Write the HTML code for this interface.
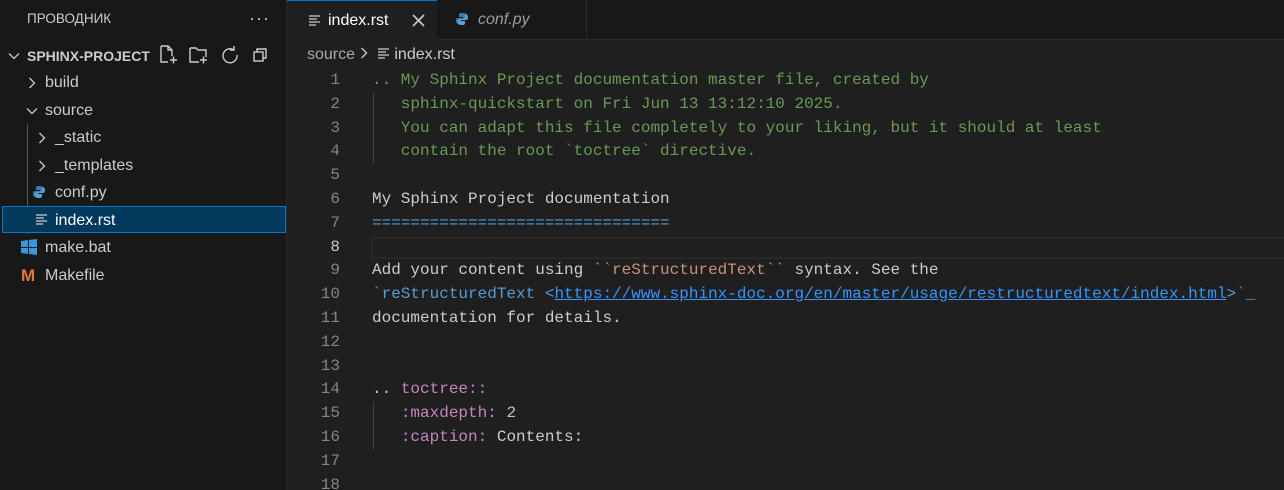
<!DOCTYPE html>
<html><head><meta charset="utf-8"><style>
*{margin:0;padding:0;box-sizing:border-box}
html,body{width:1284px;height:490px;overflow:hidden}
body{background:#1f1f1f;font-family:"Segoe UI","Liberation Sans",sans-serif;color:#cccccc;position:relative}
#side{position:absolute;left:0;top:0;width:287px;height:490px;background:#181818;border-right:1px solid #2b2b2b}
.hdr{position:absolute;left:27px;top:11px;font-size:13.5px;color:#cccccc}
.dots{position:absolute;left:249px;top:8px;font-size:18px;letter-spacing:1px}
.row{position:absolute;left:0;width:287px;height:27px;font-size:16px;line-height:27px;white-space:nowrap}
.sel{background:#04395e;border:1px solid #0078d4;left:2px;width:284px}
.chev{position:absolute;top:8px}
#tabs{position:absolute;left:287px;top:0;right:0;height:40px;background:#181818;border-bottom:1px solid #2b2b2b}
.tab{position:absolute;top:0;height:40px;font-size:16px;line-height:40px}
#code{position:absolute;left:287px;top:69px;right:0;font-family:"Liberation Mono",monospace;font-size:16px}
.l{position:absolute;height:23.8px;line-height:23.8px;white-space:pre;width:997px}
.num{position:absolute;width:53px;text-align:right;left:0;color:#858585}
.t{position:absolute;left:85px}
.g{color:#6a9955}.b{color:#569cd6}.o{color:#ce9178}.m{color:#c586c0}.n{color:#b5cea8}.u{color:#3794ff}
</style></head><body>
<div id="side">
<div class="hdr">ПРОВОДНИК</div><div class="dots">···</div>
<div class="row" style="top:42px"><svg class="chev" style="left:8px" width="12" height="12" fill="none" stroke="#ccc" stroke-width="1.3"><path d="M1 3.5l5 5 5-5"/></svg><b style="position:absolute;left:27px;font-size:14px;top:1px;font-family:'Liberation Sans',sans-serif">SPHINX-PROJECT</b>
<svg style="position:absolute;left:158px;top:2px" width="110" height="22" fill="none" stroke="#ccc" stroke-width="1.4">
<path d="M3 2h7l4 4v6M3 2v16h7M10 2v4h4M12 16h7M15.5 12.5v7"/>
<path d="M32 4h6l2 2h8v7M32 4v14h9M42 16h7M45.5 12.5v7"/>
<path d="M76 6a7 7 0 1 0 3 5M76 2v4h-4"/>
<rect x="96" y="8" width="9" height="9"/><path d="M99 8V5h9v9h-3"/>
</svg></div>
<div class="row" style="top:69px"><svg class="chev" style="left:26px" width="12" height="12" fill="none" stroke="#ccc" stroke-width="1.3"><path d="M3.5 1l5 5-5 5"/></svg><span style="position:absolute;left:45px">build</span></div>
<div class="row" style="top:97px"><svg class="chev" style="left:26px" width="12" height="12" fill="none" stroke="#ccc" stroke-width="1.3"><path d="M1 3.5l5 5 5-5"/></svg><span style="position:absolute;left:45px">source</span></div>
<div style="position:absolute;left:27px;top:124px;width:1px;height:110px;background:#585858"></div>
<div class="row" style="top:124px"><svg class="chev" style="left:36px" width="12" height="12" fill="none" stroke="#ccc" stroke-width="1.3"><path d="M3.5 1l5 5-5 5"/></svg><span style="position:absolute;left:55px">_static</span></div>
<div class="row" style="top:152px"><svg class="chev" style="left:36px" width="12" height="12" fill="none" stroke="#ccc" stroke-width="1.3"><path d="M3.5 1l5 5-5 5"/></svg><span style="position:absolute;left:55px">_templates</span></div>
<div class="row" style="top:179px"><svg style="position:absolute;left:32px;top:6px" width="14" height="14"><path d="M7 1c-3 0-3 1-3 2v2h4v1H3c-2 0-2 2-2 3s1 3 2 3h1V9c0-1 1-2 2-2h3c1 0 2-1 2-2V3c0-1-1-2-4-2z" fill="#3b7bb5"/><path d="M7 13c3 0 3-1 3-2V9H6V8h5c2 0 2-2 2-3s-1-3-2-3h-1v3c0 1-1 2-2 2H5c-1 0-2 1-2 2v2c0 1 1 2 4 2z" fill="#5a9fd4"/></svg><span style="position:absolute;left:55px">conf.py</span></div>
<div class="row sel" style="top:206px"><svg style="position:absolute;left:33px;top:7px" width="12" height="11" stroke="#ccc" stroke-width="1.3"><path d="M0 1h11M0 4h8M0 7h11M0 10h7"/></svg><span style="position:absolute;left:52px;top:0px;color:#fff">index.rst</span></div>
<div class="row" style="top:234px"><svg style="position:absolute;left:21px;top:5px" width="16" height="16" fill="#3a96dd"><path d="M0 2l7-1v7H0zM8 1l8-1v8H8zM0 9h7v6l-7-1zM8 9h8v7l-8-1z"/></svg><span style="position:absolute;left:45px">make.bat</span></div>
<div class="row" style="top:262px"><b style="position:absolute;left:21px;color:#e37933;font-size:17px;font-family:'Liberation Sans',sans-serif">M</b><span style="position:absolute;left:45px">Makefile</span></div>
</div>
<div id="tabs">
<div class="tab" style="left:0;width:150px;background:#1f1f1f;border-top:1px solid #0078d4;height:41px"><svg style="position:absolute;left:22px;top:14px" width="12" height="11" stroke="#ccc" stroke-width="1.3"><path d="M0 1h11M0 4h8M0 7h11M0 10h7"/></svg><span style="position:absolute;left:41px;color:#fff">index.rst</span><svg style="position:absolute;left:125px;top:13px" width="13" height="13" stroke="#ccc" stroke-width="1.6"><path d="M1 1l11 11M12 1L1 12"/></svg></div>
<div class="tab" style="left:150px;width:150px;border-right:1px solid #2b2b2b"><svg style="position:absolute;left:18px;top:12px" width="14" height="14"><path d="M7 1c-3 0-3 1-3 2v2h4v1H3c-2 0-2 2-2 3s1 3 2 3h1V9c0-1 1-2 2-2h3c1 0 2-1 2-2V3c0-1-1-2-4-2z" fill="#3b7bb5"/><path d="M7 13c3 0 3-1 3-2V9H6V8h5c2 0 2-2 2-3s-1-3-2-3h-1v3c0 1-1 2-2 2H5c-1 0-2 1-2 2v2c0 1 1 2 4 2z" fill="#5a9fd4"/></svg><i style="position:absolute;left:41px;color:#9d9d9d">conf.py</i></div>
</div>
<div style="position:absolute;left:307px;top:46px;font-size:16px;white-space:nowrap;color:#a9a9a9">source <svg width="10" height="12" fill="none" stroke="#ccc" stroke-width="1.3"><path d="M2.5 1l5 5-5 5"/></svg> <svg width="12" height="11" stroke="#ccc" stroke-width="1.3" style="margin-left:4px"><path d="M0 1h11M0 4h8M0 7h11M0 10h7"/></svg> <span style="color:#cccccc">index.rst</span></div>
<div id="code">
<div style="position:absolute;left:86px;top:24px;width:1px;height:71px;background:#404040"></div>
<div style="position:absolute;left:86px;top:333px;width:1px;height:48px;background:#404040"></div>
<div class="l" style="top:0"><span class="num">1</span><span class="t g">.. My Sphinx Project documentation master file, created by</span></div>
<div class="l" style="top:23.8px"><span class="num">2</span><span class="t g">   sphinx-quickstart on Fri Jun 13 13:12:10 2025.</span></div>
<div class="l" style="top:47.6px"><span class="num">3</span><span class="t g">   You can adapt this file completely to your liking, but it should at least</span></div>
<div class="l" style="top:71.4px"><span class="num">4</span><span class="t g">   contain the root `toctree` directive.</span></div>
<div class="l" style="top:95.2px"><span class="num">5</span></div>
<div class="l" style="top:119px"><span class="num">6</span><span class="t">My Sphinx Project documentation</span></div>
<div class="l" style="top:142.8px"><span class="num">7</span><span class="t b">===============================</span></div>
<div class="l" style="top:166.6px"><span class="num" style="color:#ccc">8</span><div style="position:absolute;left:84px;top:1px;width:920px;height:22px;border:2px solid #282828"></div></div>
<div class="l" style="top:190.4px"><span class="num">9</span><span class="t">Add your content using <span class="o">``reStructuredText``</span> syntax. See the</span></div>
<div class="l" style="top:214.2px"><span class="num">10</span><span class="t b">`reStructuredText &lt;<span class="u" style="text-decoration:underline">https://www.sphinx-doc.org/en/master/usage/restructuredtext/index.html</span>&gt;`_</span></div>
<div class="l" style="top:238px"><span class="num">11</span><span class="t">documentation for details.</span></div>
<div class="l" style="top:261.8px"><span class="num">12</span></div>
<div class="l" style="top:285.6px"><span class="num">13</span></div>
<div class="l" style="top:309.4px"><span class="num">14</span><span class="t"><span style="color:#ccc">.. </span><span class="m">toctree::</span></span></div>
<div class="l" style="top:333.2px"><span class="num">15</span><span class="t">   <span class="m">:maxdepth:</span> <span class="n">2</span></span></div>
<div class="l" style="top:357px"><span class="num">16</span><span class="t">   <span class="m">:caption:</span> Contents:</span></div>
<div class="l" style="top:380.8px"><span class="num">17</span></div>
<div class="l" style="top:404.6px"><span class="num">18</span></div>
</div>
</body></html>
